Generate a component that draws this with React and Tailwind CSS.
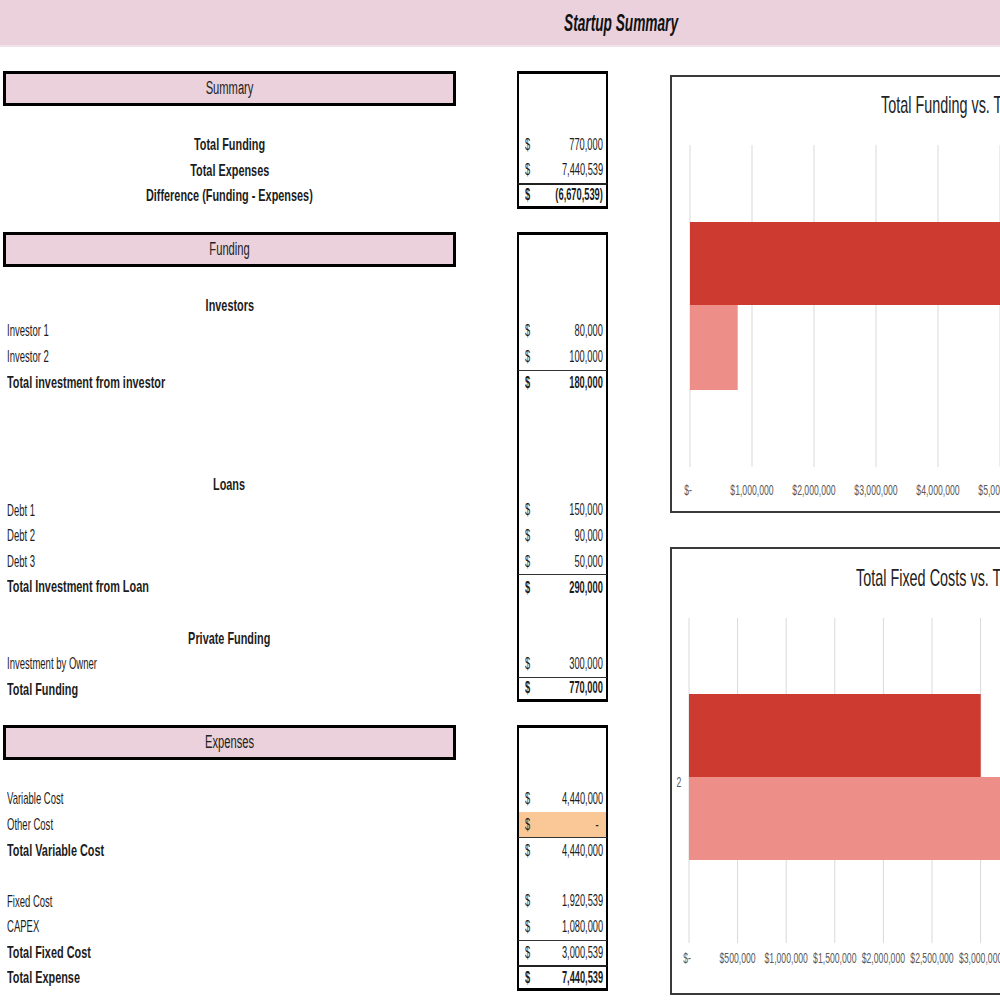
import React from "react";

const FONT = "font-['Liberation_Sans',Arial,sans-serif]";

// the sheet font is very condensed, squeeze the glyphs horizontally
const SCALE = {
  n: "scale-x-[0.56]",
  b: "scale-x-[0.64]",
  v: "scale-x-[0.58]",
  h: "scale-x-[0.62]",
  t: "scale-x-[0.57]",
  c: "scale-x-[0.6]",
};

const Sq = ({ children, o = "l", s = "n", className = "" }) => (
  <span
    className={`inline-block whitespace-nowrap ${SCALE[s]} ${
      o === "l" ? "origin-left" : o === "r" ? "origin-right" : "origin-center"
    } ${className}`}
  >
    {children}
  </span>
);

const SUMMARY = [
  { k: "c", label: "Total Funding", v: "770,000" },
  { k: "c", label: "Total Expenses", v: "7,440,539" },
  { k: "c", label: "Difference (Funding - Expenses)", v: "(6,670,539)", vb: true, line: "thick" },
];

const FUNDING = [
  { k: "c", label: "Investors" },
  { k: "i", label: "Investor 1", v: "80,000" },
  { k: "i", label: "Investor 2", v: "100,000" },
  { k: "t", label: "Total investment from investor", v: "180,000", vb: true, line: "thin" },
  {},
  {},
  {},
  { k: "c", label: "Loans" },
  { k: "i", label: "Debt 1", v: "150,000" },
  { k: "i", label: "Debt 2", v: "90,000" },
  { k: "i", label: "Debt 3", v: "50,000" },
  { k: "t", label: "Total Investment from Loan", v: "290,000", vb: true, line: "thin" },
  {},
  { k: "c", label: "Private Funding" },
  { k: "i", label: "Investment by Owner", v: "300,000" },
  { k: "t", label: "Total Funding", v: "770,000", vb: true, line: "thin" },
];

const EXPENSES = [
  { k: "i", label: "Variable Cost", v: "4,440,000" },
  { k: "i", label: "Other Cost", v: "-", bg: true },
  { k: "t", label: "Total Variable Cost", v: "4,440,000", line: "thin" },
  {},
  { k: "i", label: "Fixed Cost", v: "1,920,539" },
  { k: "i", label: "CAPEX", v: "1,080,000" },
  { k: "t", label: "Total Fixed Cost", v: "3,000,539", line: "thin" },
  { k: "t", label: "Total Expense", v: "7,440,539", vb: true, line: "thick" },
];

const Row = ({ r, last }) => (
  <div className="flex h-[25.6px]">
    <div
      className={`ml-[3px] w-[453px] flex items-center text-[17px] text-[#1c1c1c] ${
        r.k === "c" ? "justify-center font-bold" : r.k === "t" ? "pl-[4px] font-bold" : "pl-[4px]"
      }`}
    >
      {r.label && (
        <Sq o={r.k === "c" ? "c" : "l"} s={r.k === "i" ? "n" : "b"}>
          {r.label}
        </Sq>
      )}
    </div>
    <div
      className={`ml-[61px] w-[91px] border-x-2 border-black flex items-center pl-[6px] pr-[3px] text-[16px] text-[#1c1c1c] ${
        r.line === "thin" ? "border-t border-t-[#333]" : r.line === "thick" ? "border-t-2 border-t-[#222]" : ""
      } ${last ? "border-b-[3px]" : ""} ${r.bg ? "bg-[#f9c896]" : ""} ${r.vb ? "font-bold" : ""}`}
    >
      {r.v && (
        <>
          <Sq o="l" s="v" className="shrink-0">$</Sq>
          <div className="flex-1 min-w-0 flex justify-end">
            <Sq o="r" s="v" className={`shrink-0 ${r.v === "-" ? "pr-[8px]" : ""}`}>
              {r.v}
            </Sq>
          </div>
        </>
      )}
    </div>
  </div>
);

const Section = ({ title, rows, className = "" }) => (
  <div className={`flex flex-col ${className}`}>
    <div className="flex h-[35px]">
      <div className="ml-[3px] w-[453px] border-[3px] border-black bg-[#ead1dc] flex items-center justify-center text-[18px] text-[#222]">
        <Sq o="c" s="h">{title}</Sq>
      </div>
      <div className="ml-[61px] w-[91px] border-x-2 border-t-[3px] border-black" />
    </div>
    <div className="flex h-[26px]">
      <div className="ml-[3px] w-[453px]" />
      <div className="ml-[61px] w-[91px] border-x-2 border-black" />
    </div>
    {rows.map((r, i) => (
      <Row key={i} r={r} last={i === rows.length - 1} />
    ))}
  </div>
);

const SX = 0.62;

const Chart = ({ title, titlePad, titleH, h, grid, gridTop, gridBottom, bars, labels, cat, labelY }) => (
  <div className="w-[680px] border-2 border-[#3a3a3a] bg-white flex flex-col">
    <div className={`flex items-center text-[24px] text-[#222] ${titlePad} ${titleH}`}>
      <Sq o="l" s="c">{title}</Sq>
    </div>
    <svg width="676" height={h} className="block">
      {labels.map((_, i) => (
        <line
          key={i}
          x1={grid.x0 + i * grid.step}
          x2={grid.x0 + i * grid.step}
          y1={gridTop}
          y2={gridBottom}
          stroke="#d9d9d9"
          strokeWidth="1"
        />
      ))}
      {bars.map((b, i) => (
        <rect key={i} x={grid.x0} y={b.y} width={b.w} height={b.h} fill={b.c} />
      ))}
      {cat && (
        <text
          x={cat.x / SX}
          y={cat.y}
          transform={`scale(${SX} 1)`}
          fontSize="14"
          fill="#595959"
          fontFamily="Liberation Sans, Arial, sans-serif"
          textAnchor="middle"
        >
          {cat.t}
        </text>
      )}
      {labels.map((t, i) => (
        <text
          key={t}
          x={(grid.x0 + i * grid.step - (i === 0 ? 2 : 0)) / SX}
          y={labelY}
          transform={`scale(${SX} 1)`}
          fontSize="14"
          fill="#595959"
          fontFamily="Liberation Sans, Arial, sans-serif"
          textAnchor="middle"
        >
          {t}
        </text>
      ))}
    </svg>
  </div>
);

export default function App() {
  return (
    <div className={`w-[1000px] h-[1000px] overflow-hidden bg-white ${FONT}`}>
      <div className="h-[47px] bg-[#ead1dc] border-b-2 border-[#f1e1e8] flex items-center justify-center pl-[242px] text-[24px] font-bold italic text-[#111]">
        <Sq o="c" s="t">Startup Summary</Sq>
      </div>

      <div className="flex">
        <div className="w-[608px] shrink-0 flex flex-col pt-[24px]">
          <Section title="Summary" rows={SUMMARY} />
          <Section title="Funding" rows={FUNDING} className="mt-[23px]" />
          <Section title="Expenses" rows={EXPENSES} className="mt-[23px]" />
        </div>

        <div className="ml-[62px] shrink-0 flex flex-col pt-[28px]">
          <Chart
            title="Total Funding vs. Total Expenses"
            titlePad="pl-[209px]"
            titleH="h-[56px]"
            h={378}
            grid={{ x0: 18, step: 62 }}
            gridTop={12}
            gridBottom={334}
            bars={[
              { y: 89, h: 83, w: 461, c: "#cd3a2f" },
              { y: 172, h: 85, w: 47.7, c: "#ee8e89" },
            ]}
            labels={["$-", "$1,000,000", "$2,000,000", "$3,000,000", "$4,000,000", "$5,000,000", "$6,000,000", "$7,000,000", "$8,000,000", "$9,000,000", "$10,000,000"]}
            labelY={362}
          />
          <div className="mt-[34px]">
            <Chart
              title="Total Fixed Costs vs. Total Variable Costs"
              titlePad="pl-[184px]"
              titleH="h-[58px]"
              h={386}
              grid={{ x0: 17, step: 48.6 }}
              gridTop={11}
              gridBottom={336}
              bars={[
                { y: 87, h: 83, w: 291.7, c: "#cd3a2f" },
                { y: 170, h: 83, w: 431.6, c: "#ee8e89" },
              ]}
              cat={{ x: 7, y: 180, t: "2" }}
              labels={["$-", "$500,000", "$1,000,000", "$1,500,000", "$2,000,000", "$2,500,000", "$3,000,000", "$3,500,000", "$4,000,000", "$4,500,000", "$5,000,000", "$5,500,000", "$6,000,000", "$6,500,000"]}
              labelY={356}
            />
          </div>
        </div>
      </div>
    </div>
  );
}
